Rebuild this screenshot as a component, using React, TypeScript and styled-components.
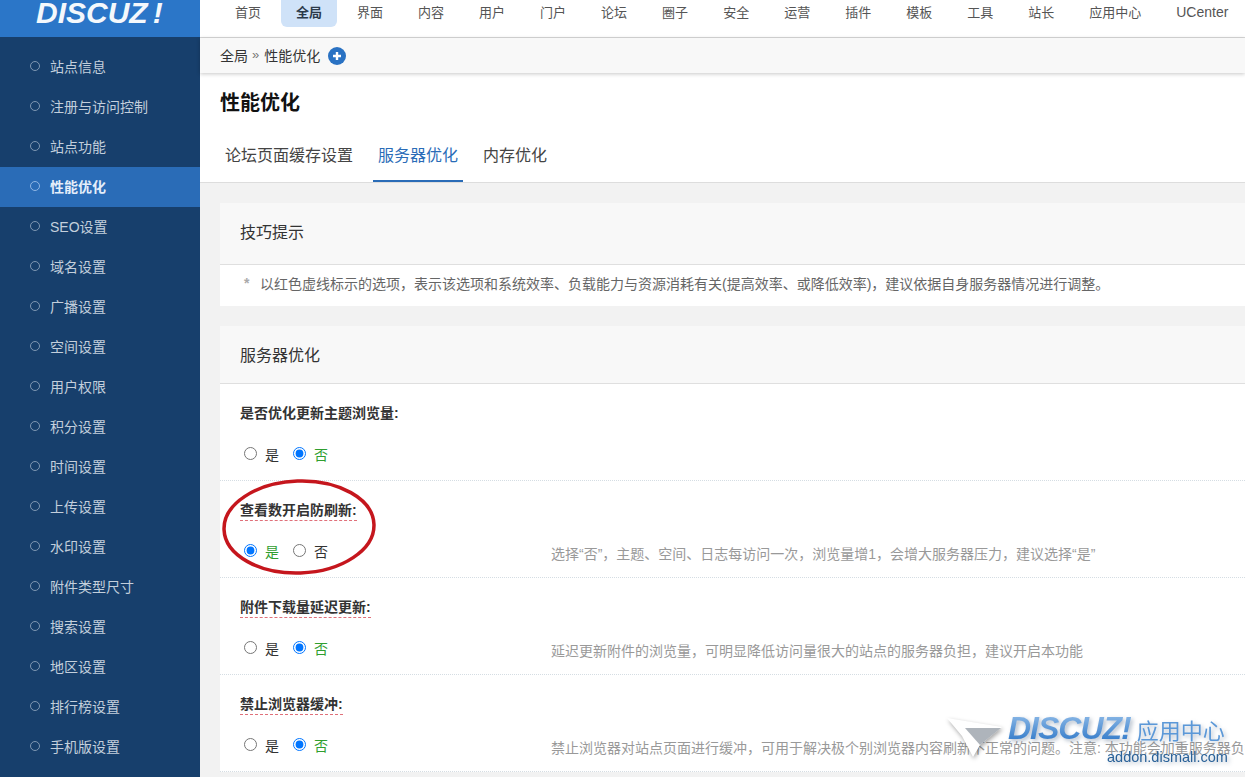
import React from "react";
import styled, { createGlobalStyle } from "styled-components";

const Global = createGlobalStyle`
  html, body { margin: 0; padding: 0; height: 100%; overflow: hidden; }
  body { font-family: "Liberation Sans", "Noto Sans CJK SC", sans-serif; color: #333; background: #f2f2f2; }
`;

const Page = styled.div`
  position: relative;
  display: flex;
  width: 1245px;
  height: 777px;
  overflow: hidden;
`;
const Sidebar = styled.aside`
  flex: none;
  width: 200px;
  background: #173f6c;
`;
const LogoBar = styled.div`
  height: 37px;
  background: #2b76c8;
  overflow: hidden;
  padding-left: 36px;
  margin-bottom: 10px;
`;
const LogoText = styled.div`
  font: italic 700 30px/26px "Liberation Sans", sans-serif;
  color: #f4f8fc;
  white-space: nowrap;
  b { margin-left: 5px; font-weight: 700; }
`;
const SideItem = styled.div<{ $active?: boolean }>`
  display: flex;
  align-items: center;
  box-sizing: border-box;
  height: 40px;
  padding: 0 0 2px 30px;
  font-size: 14px;
  font-weight: ${(p) => (p.$active ? 700 : 400)};
  color: ${(p) => (p.$active ? "#e4eefa" : "#c3cfdc")};
  background: ${(p) => (p.$active ? "#2a6cb7" : "transparent")};
`;
const SideDot = styled.span<{ $active?: boolean }>`
  flex: none;
  width: 8px;
  height: 8px;
  margin-right: 10px;
  border: 1px solid ${(p) => (p.$active ? "#8fb6e4" : "#7f97b2")};
  border-radius: 50%;
`;
const Main = styled.main`
  flex: 1;
  min-width: 0;
`;
const TopNav = styled.nav`
  display: flex;
  height: 37px;
  padding-left: 20px;
  background: #fff;
  border-bottom: 1px solid #d8d8d8;
`;
const NavItem = styled.div<{ $active?: boolean; $latin?: boolean }>`
  flex: none;
  height: 27px;
  padding: 0 15px;
  margin-right: 5px;
  font-size: ${(p) => (p.$latin ? 14 : 13)}px;
  line-height: 25px;
  white-space: nowrap;
  border-radius: 0 0 6px 6px;
  color: ${(p) => (p.$active ? "#2c3a4a" : "#555")};
  font-weight: ${(p) => (p.$active ? 700 : 400)};
  background: ${(p) => (p.$active ? "#cfe2f8" : "transparent")};
`;
const Crumb = styled.div`
  position: relative;
  display: flex;
  align-items: center;
  box-sizing: border-box;
  height: 35px;
  padding: 0 0 2px 20px;
  background: #f8f8f8;
  box-shadow: 0 1px 4px rgba(0, 0, 0, 0.22);
  font-size: 14px;
  color: #333;
`;
const CrumbSep = styled.span`
  margin: 0 5px 0 4px;
  font-size: 13px;
  color: #777;
`;
const PlusBadge = styled.span`
  display: flex;
  margin: 2px 0 0 8px;
`;
const Head = styled.header`
  height: 109px;
  background: #fff;
  border-bottom: 1px solid #ddd;
  padding-left: 20px;
  display: flex;
  flex-direction: column;
`;
const Title = styled.h1`
  margin: 16px 0 0;
  font-size: 20px;
  line-height: 28px;
  font-weight: 700;
  color: #111;
`;
const Tabs = styled.div`
  display: flex;
  margin-top: auto;
`;
const Tab = styled.div<{ $active?: boolean }>`
  flex: none;
  height: 50px;
  line-height: 48px;
  padding: 0 5px;
  margin-right: 15px;
  box-sizing: border-box;
  font-size: 16px;
  color: ${(p) => (p.$active ? "#2a6cb7" : "#444")};
  border-bottom: 2px solid ${(p) => (p.$active ? "#2a6cb7" : "transparent")};
`;
const Content = styled.div`
  padding: 20px 0 0 20px;
`;
const Card = styled.section`
  background: #fff;
  margin-bottom: 20px;
`;
const CardHead = styled.div<{ $h: number; $pb: number }>`
  height: ${(p) => p.$h}px;
  box-sizing: border-box;
  display: flex;
  align-items: center;
  padding: 0 0 ${(p) => p.$pb}px 20px;
  background: #f8f8f8;
  border-bottom: 1px solid #dfdfdf;
  font-size: 16px;
  color: #333;
`;
const Tip = styled.div`
  display: flex;
  align-items: center;
  box-sizing: border-box;
  height: 41px;
  padding: 0 0 6px 24px;
  font-size: 14px;
  color: #666;
  white-space: nowrap;
  i { font-style: normal; font-weight: 700; color: #aaa; width: 16px; font-size: 14px; }
`;
const Row = styled.div`
  position: relative;
  box-sizing: border-box;
  height: 97px;
  padding: 19px 0 0 20px;
  border-bottom: 1px dotted #d5dde3;
`;
const Label = styled.div`
  height: 19px;
  line-height: 19px;
`;
const LabelText = styled.span<{ $dashed?: boolean }>`
  display: inline-block;
  font-size: 14px;
  font-weight: 700;
  color: #333;
  border-bottom: ${(p) => (p.$dashed ? "1px dashed #e0707a" : "1px solid transparent")};
`;
const Controls = styled.div`
  display: flex;
  align-items: center;
  margin-top: 22px;
  height: 19px;
`;
const RadioGroup = styled.div`
  flex: none;
  width: 311px;
  display: flex;
  align-items: center;
  padding-left: 4px;
  box-sizing: border-box;
`;
const RadioLabel = styled.label<{ $on?: boolean }>`
  display: flex;
  align-items: center;
  margin-right: 14px;
  font-size: 14px;
  color: ${(p) => (p.$on ? "#2f9e2f" : "#333")};
  input { width: 13px; height: 13px; margin: 0 8px 0 0; }
`;
const Desc = styled.div`
  font-size: 14px;
  line-height: 19px;
  color: #999;
  white-space: nowrap;
  padding-top: 7px;
`;
const Circle = styled.svg`
  position: absolute;
  left: 1px;
  top: -3px;
  pointer-events: none;
`;
const Watermark = styled.div`
  position: absolute;
  left: 946px;
  top: 713px;
  width: 299px;
  height: 64px;
  pointer-events: none;
  display: flex;
`;
const Plane = styled.svg`
  flex: none;
  margin-top: 3px;
  filter: drop-shadow(1px 2px 2px rgba(0, 0, 0, 0.35));
`;
const WmText = styled.div`
  margin-left: 2px;
  display: flex;
  flex-direction: column;
  filter: drop-shadow(2px 2px 2px rgba(30, 60, 100, 0.35));
`;
const WmTop = styled.div`
  display: flex;
  align-items: baseline;
  white-space: nowrap;
  line-height: 30px;
`;
const WmLogo = styled.span`
  font: italic 700 32px/30px "Liberation Sans", sans-serif;
  letter-spacing: -1px;
  background: linear-gradient(#8fbbe8, #2f78c8);
  -webkit-background-clip: text;
  background-clip: text;
  color: transparent;
`;
const WmCn = styled.span`
  margin-left: 6px;
  font-size: 22px;
  color: #5b98d8;
`;
const WmUrl = styled.div`
  margin: 2px 0 0 99px;
  font-size: 14.5px;
  line-height: 16px;
  color: #2a6299;
  white-space: nowrap;
`;

const side = ["站点信息","注册与访问控制","站点功能","性能优化","SEO设置","域名设置","广播设置","空间设置","用户权限","积分设置","时间设置","上传设置","水印设置","附件类型尺寸","搜索设置","地区设置","排行榜设置","手机版设置"];
const top = ["首页","全局","界面","内容","用户","门户","论坛","圈子","安全","运营","插件","模板","工具","站长","应用中心","UCenter"];
const rows = [
  { label: "是否优化更新主题浏览量:", yes: false, dashed: false, desc: "" },
  { label: "查看数开启防刷新:", yes: true, dashed: true, circle: true, desc: "选择“否”，主题、空间、日志每访问一次，浏览量增1，会增大服务器压力，建议选择“是”" },
  { label: "附件下载量延迟更新:", yes: false, dashed: true, desc: "延迟更新附件的浏览量，可明显降低访问量很大的站点的服务器负担，建议开启本功能" },
  { label: "禁止浏览器缓冲:", yes: false, dashed: true, desc: "禁止浏览器对站点页面进行缓冲，可用于解决极个别浏览器内容刷新不正常的问题。注意: 本功能会加重服务器负担" },
];

export default function App() {
  return (
    <Page>
      <Global />
      <Sidebar>
        <LogoBar>
          <LogoText>DISCUZ<b>!</b></LogoText>
        </LogoBar>
        {side.map((s) => (
          <SideItem key={s} $active={s === "性能优化"}>
            <SideDot $active={s === "性能优化"} />
            {s}
          </SideItem>
        ))}
      </Sidebar>
      <Main>
        <TopNav>
          {top.map((t) => (
            <NavItem key={t} $active={t === "全局"} $latin={t === "UCenter"}>{t}</NavItem>
          ))}
        </TopNav>
        <Crumb>
          全局<CrumbSep>»</CrumbSep>性能优化
          <PlusBadge>
            <svg width="18" height="18" viewBox="0 0 18 18">
              <circle cx="9" cy="9" r="9" fill="#2a72c3" />
              <path d="M9 5v8M5 9h8" stroke="#fff" strokeWidth="2.4" />
            </svg>
          </PlusBadge>
        </Crumb>
        <Head>
          <Title>性能优化</Title>
          <Tabs>
            <Tab>论坛页面缓存设置</Tab>
            <Tab $active>服务器优化</Tab>
            <Tab>内存优化</Tab>
          </Tabs>
        </Head>
        <Content>
          <Card>
            <CardHead $h={62} $pb={6}>技巧提示</CardHead>
            <Tip><i>*</i>以红色虚线标示的选项，表示该选项和系统效率、负载能力与资源消耗有关(提高效率、或降低效率)，建议依据自身服务器情况进行调整。</Tip>
          </Card>
          <Card>
            <CardHead $h={58} $pb={2}>服务器优化</CardHead>
            {rows.map((r) => (
              <Row key={r.label}>
                <Label><LabelText $dashed={r.dashed}>{r.label}</LabelText></Label>
                <Controls>
                  <RadioGroup>
                    <RadioLabel $on={r.yes}><input type="radio" readOnly checked={r.yes} />是</RadioLabel>
                    <RadioLabel $on={!r.yes}><input type="radio" readOnly checked={!r.yes} />否</RadioLabel>
                  </RadioGroup>
                  {r.desc && <Desc>{r.desc}</Desc>}
                </Controls>
                {r.circle && (
                  <Circle width="156" height="98" viewBox="0 0 156 98">
                    <ellipse cx="78" cy="49" rx="75" ry="46" fill="none" stroke="#c5161d" strokeWidth="3.5" transform="rotate(-2 78 49)" />
                  </Circle>
                )}
              </Row>
            ))}
          </Card>
        </Content>
      </Main>
      <Watermark>
        <Plane width="60" height="44" viewBox="0 0 60 44">
          <path d="M1 2 L56 11 L34 29 L27 41 L16 20 Z" fill="#fff" />
          <path d="M19 12 L55 12 L34 29 Z" fill="#aeb4bb" />
        </Plane>
        <WmText>
          <WmTop><WmLogo>DISCUZ!</WmLogo><WmCn>应用中心</WmCn></WmTop>
          <WmUrl>addon.dismall.com</WmUrl>
        </WmText>
      </Watermark>
    </Page>
  );
}
